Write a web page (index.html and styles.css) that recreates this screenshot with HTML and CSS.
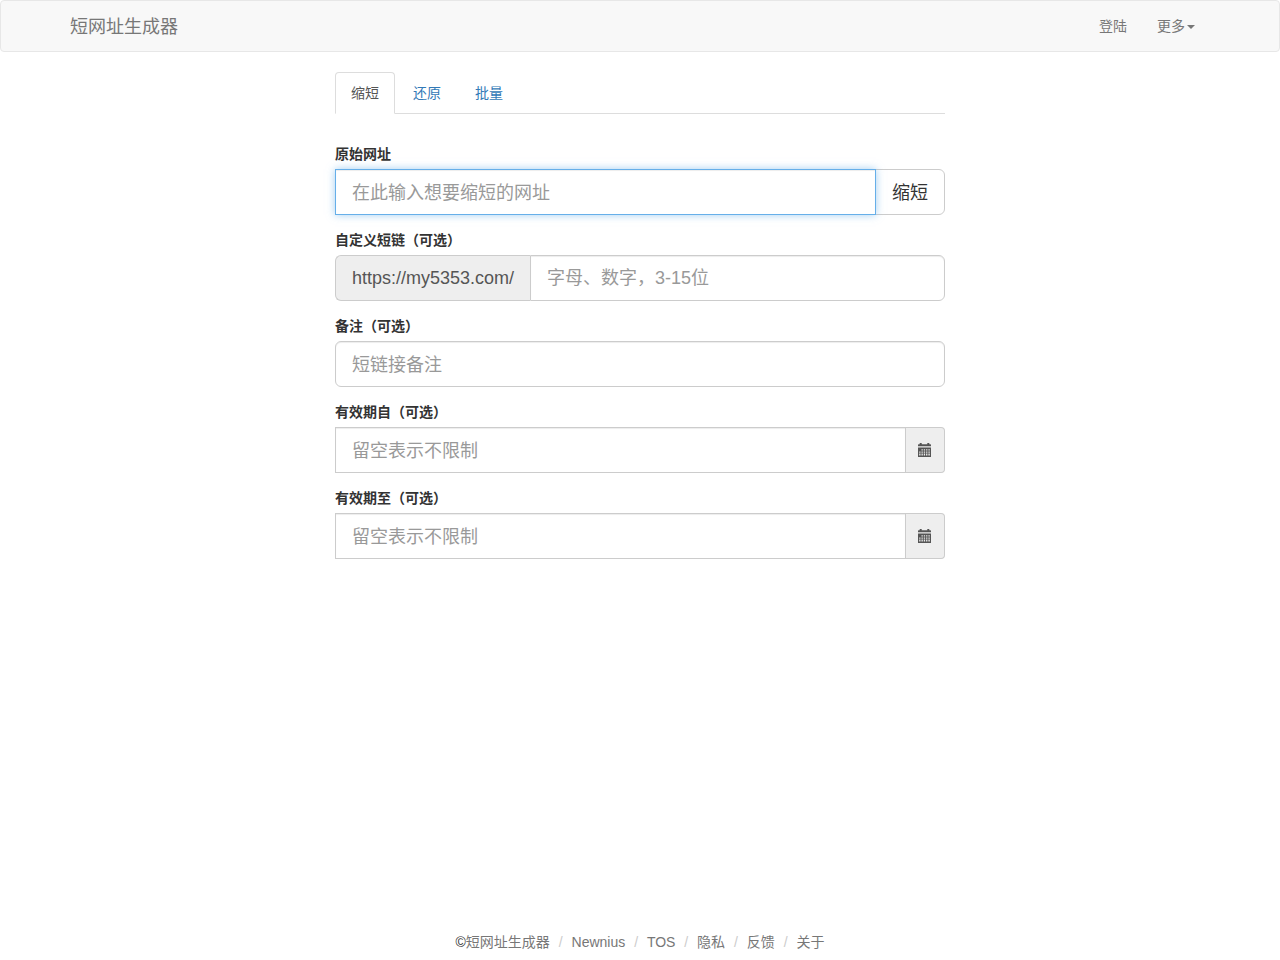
FILE: index.html
```html
<!DOCTYPE html>
<html lang="zh-CN">
<head>
    <meta charset="UTF-8">
    <meta name="viewport" content="width=device-width, initial-scale=1.0">
    <title>短网址生成器</title>
    <link rel="stylesheet" href="styles.css">
</head>
<body>
    <nav class="navbar">
        <div class="container">
            <a class="brand" href="#">短网址生成器</a>
            <ul class="navbar-right">
                <li><a href="#">登陆</a></li>
                <li><a href="#">更多<span class="caret"></span></a></li>
            </ul>
        </div>
    </nav>

    <main class="content">
        <ul class="tabs">
            <li class="active"><a href="#">缩短</a></li>
            <li><a href="#">还原</a></li>
            <li><a href="#">批量</a></li>
        </ul>

        <form class="shorten-form">
            <div class="form-group">
                <label for="url">原始网址</label>
                <div class="input-group">
                    <input type="text" id="url" class="form-control active" placeholder="在此输入想要缩短的网址">
                    <button type="button" class="btn">缩短</button>
                </div>
            </div>

            <div class="form-group">
                <label for="alias">自定义短链（可选）</label>
                <div class="input-group">
                    <span class="addon addon-left">https://my5353.com/</span>
                    <input type="text" id="alias" class="form-control rounded-right" placeholder="字母、数字，3-15位">
                </div>
            </div>

            <div class="form-group">
                <label for="remark">备注（可选）</label>
                <div class="input-group">
                    <input type="text" id="remark" class="form-control rounded" placeholder="短链接备注">
                </div>
            </div>

            <div class="form-group">
                <label for="valid-from">有效期自（可选）</label>
                <div class="input-group">
                    <input type="text" id="valid-from" class="form-control" placeholder="留空表示不限制">
                    <span class="addon addon-right">
                        <svg class="icon" viewBox="0 0 14 14"><use href="#calendar"/></svg>
                    </span>
                </div>
            </div>

            <div class="form-group">
                <label for="valid-to">有效期至（可选）</label>
                <div class="input-group">
                    <input type="text" id="valid-to" class="form-control" placeholder="留空表示不限制">
                    <span class="addon addon-right">
                        <svg class="icon" viewBox="0 0 14 14"><use href="#calendar"/></svg>
                    </span>
                </div>
            </div>
        </form>
    </main>

    <footer>
        <ul class="links">
            <li>©<a href="#">短网址生成器</a></li>
            <li><a href="#">Newnius</a></li>
            <li><a href="#">TOS</a></li>
            <li><a href="#">隐私</a></li>
            <li><a href="#">反馈</a></li>
            <li><a href="#">关于</a></li>
        </ul>
    </footer>

    <svg class="sprite">
        <symbol id="calendar" viewBox="0 0 14 14">
            <path d="M1.7 0h2v1.2h5.6V0h2v1.2h1.2l.5.5v1.6H0V1.7l.5-.5h1.2z"/>
            <path fill-rule="evenodd" d="M0 4.6h13V14H0zM3.5 6.2v1.3h1.3V6.2zm2.3 0v1.3h1.3V6.2zm2.3 0v1.3h1.3V6.2zm2.3 0v1.3h1.4V6.2zM1.2 8.4v1.3h1.3V8.4zm2.3 0v1.3h1.3V8.4zm2.3 0v1.3h1.3V8.4zm2.3 0v1.3h1.3V8.4zm2.3 0v1.3h1.4V8.4zM1.2 10.6v1.9h1.3v-1.9zm2.3 0v1.9h1.3v-1.9zm2.3 0v1.9h1.3v-1.9zm2.3 0v1.9h1.3v-1.9zm2.3 0v1.9h1.4v-1.9z"/>
        </symbol>
    </svg>
</body>
</html>
```

FILE: styles.css
```css
* {
    box-sizing: border-box;
}

body {
    display: flex;
    flex-direction: column;
    min-height: 100vh;
    margin: 0;
    font-family: "Liberation Sans", "Noto Sans CJK SC", sans-serif;
    font-size: 14px;
    line-height: 20px;
    color: #333;
    background: #fff;
}

a {
    color: #337ab7;
    text-decoration: none;
}

ul {
    list-style: none;
    margin: 0;
    padding: 0;
}

.navbar {
    height: 52px;
    margin-bottom: 20px;
    background: #f8f8f8;
    border: 1px solid #e7e7e7;
    border-radius: 4px;
}

.container {
    display: flex;
    justify-content: space-between;
    width: 1140px;
    margin: 0 auto;
}

.navbar a {
    display: block;
    padding: 15px 0;
    color: #777;
}

.navbar .brand {
    padding: 16px 0 14px;
    font-size: 18px;
}

.navbar-right {
    display: flex;
}

.navbar .navbar-right a {
    padding: 15px;
}

.caret {
    display: inline-block;
    margin-left: 2px;
    vertical-align: middle;
    border-top: 4px solid;
    border-right: 4px solid transparent;
    border-left: 4px solid transparent;
}

.content {
    width: 610px;
    margin: 0 auto;
    flex: 1;
}

.tabs {
    display: flex;
    height: 42px;
    margin-bottom: 30px;
    border-bottom: 1px solid #ddd;
}

.tabs li {
    height: 42px;
    margin-right: 2px;
}

.tabs a {
    display: block;
    height: 42px;
    padding: 10px 15px;
    border: 1px solid transparent;
    border-radius: 4px 4px 0 0;
}

.tabs .active a {
    color: #555;
    background: #fff;
    border-color: #ddd;
    border-bottom-color: transparent;
}

.form-group {
    margin-bottom: 15px;
}

label {
    display: block;
    height: 20px;
    margin-bottom: 5px;
    font-weight: bold;
}

.input-group {
    display: flex;
    height: 46px;
}

.form-control {
    flex: 1;
    min-width: 0;
    height: 46px;
    padding: 11px 16px 9px;
    font-family: inherit;
    font-size: 18px;
    line-height: 24px;
    color: #555;
    background: #fff;
    border: 1px solid #ccc;
    border-radius: 0;
    box-shadow: inset 0 1px 1px rgba(0, 0, 0, 0.075);
    outline: 0;
}

.form-control::placeholder {
    color: #999;
    opacity: 1;
}

.form-control.active,
.form-control:focus {
    z-index: 1;
    border-color: #66afe9;
    box-shadow: inset 0 1px 1px rgba(0, 0, 0, 0.075), 0 0 8px rgba(102, 175, 233, 0.6);
}

.rounded {
    border-radius: 6px;
}

.rounded-right {
    padding: 10px 16px;
    border-radius: 0 6px 6px 0;
}

.btn {
    margin-left: -1px;
    padding: 11px 16px 9px;
    font-family: inherit;
    font-size: 18px;
    line-height: 24px;
    color: #333;
    background: #fff;
    border: 1px solid #ccc;
    border-radius: 0 6px 6px 0;
    cursor: pointer;
}

.addon {
    display: flex;
    align-items: center;
    color: #555;
    background: #eee;
    border: 1px solid #ccc;
}

.addon-left {
    padding: 0 16px;
    font-size: 18px;
    border-right: 0;
    border-radius: 6px 0 0 6px;
}

.addon-right {
    padding: 0 12px;
    border-left: 0;
    border-radius: 0 4px 4px 0;
}

.icon {
    width: 14px;
    height: 14px;
    fill: currentColor;
}

.sprite {
    display: none;
}

footer {
    padding: 8px 0;
    text-align: center;
}

.links li {
    display: inline-block;
}

.links li + li::before {
    content: "/\00a0";
    padding: 0 5px;
    color: #ccc;
}

.links a {
    color: #777;
}
```
